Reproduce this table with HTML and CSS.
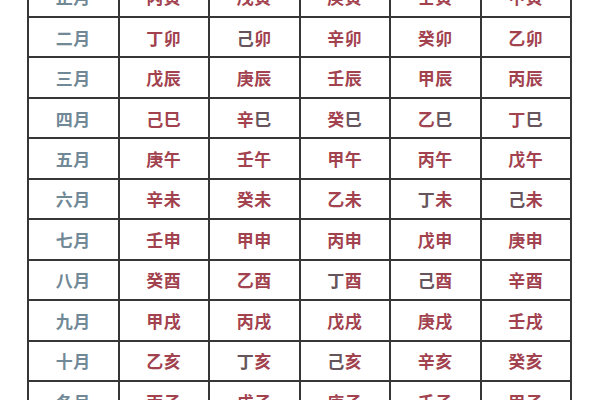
FILE: index.html
```html
<!DOCTYPE html>
<html lang="zh">
<head>
<meta charset="utf-8">
<link rel="stylesheet" href="styles.css">
</head>
<body>
<div class="page">
<div class="grid">
<div class="m">正月</div><div>丙寅</div><div>戊寅</div><div>庚寅</div><div>壬寅</div><div>甲寅</div>
<div class="m">二月</div><div>丁卯</div><div><span class="dk">己</span>卯</div><div>辛卯</div><div>癸卯</div><div>乙卯</div>
<div class="m">三月</div><div>戊辰</div><div>庚辰</div><div>壬辰</div><div>甲辰</div><div>丙辰</div>
<div class="m">四月</div><div class="dk">己巳</div><div>辛<span class="dk">巳</span></div><div>癸<span class="dk">巳</span></div><div>乙<span class="dk">巳</span></div><div>丁<span class="dk">巳</span></div>
<div class="m">五月</div><div>庚午</div><div>壬午</div><div>甲午</div><div>丙午</div><div>戊午</div>
<div class="m">六月</div><div>辛未</div><div>癸未</div><div>乙未</div><div><span class="dk">丁</span>未</div><div><span class="dk">己</span>未</div>
<div class="m">七月</div><div>壬申</div><div>甲申</div><div>丙申</div><div>戊申</div><div>庚申</div>
<div class="m">八月</div><div>癸酉</div><div>乙酉</div><div><span class="dk">丁</span>酉</div><div><span class="dk">己</span>酉</div><div>辛酉</div>
<div class="m">九月</div><div>甲戌</div><div>丙戌</div><div>戊戌</div><div>庚戌</div><div>壬戌</div>
<div class="m">十月</div><div>乙亥</div><div><span class="dk">丁</span>亥</div><div><span class="dk">己</span>亥</div><div>辛亥</div><div>癸亥</div>
<div class="m">冬月</div><div>丙子</div><div>戊子</div><div>庚子</div><div>壬子</div><div>甲子</div>
</div>
</div>
</body>
</html>
```
FILE: styles.css
```css
html, body {
  margin: 0;
  padding: 0;
  background: #ffffff;
}
.page {
  width: 600px;
  height: 400px;
  overflow: hidden;
  background: #ffffff;
}
.grid {
  margin-top: -22.44px;
  margin-left: 27px;
  width: 545px;
  box-sizing: border-box;
  padding: 0 2px;
  display: grid;
  grid-template-columns: repeat(6, 88.5px);
  grid-auto-rows: 38.44px;
  gap: 2px;
  background: #363636;
}
.grid > div {
  background: #ffffff;
  display: flex;
  align-items: center;
  justify-content: center;
  font-family: "Noto Sans CJK SC", "Noto Sans CJK JP", sans-serif;
  font-size: 17px;
  font-weight: 700;
  color: #a2424f;
  letter-spacing: 0.5px;
}
.grid > div.m {
  color: #718997;
}
.dk {
  color: #66545c;
}
```
